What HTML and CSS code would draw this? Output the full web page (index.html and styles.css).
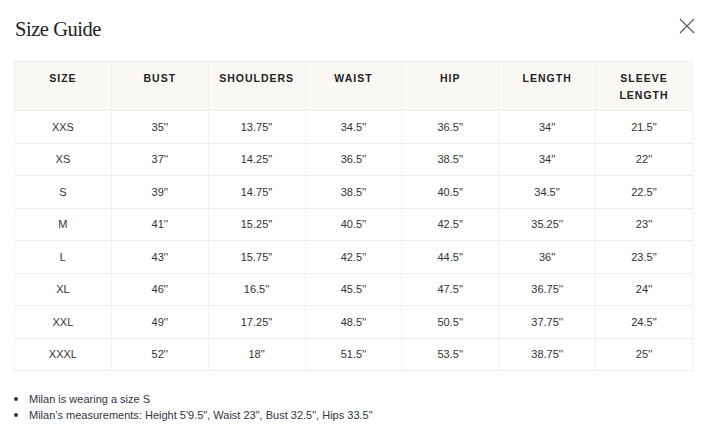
FILE: index.html
```html
<!DOCTYPE html>
<html>
<head>
<meta charset="utf-8">
<link rel="stylesheet" href="styles.css">
</head>
<body>
<div class="modal">
  <div class="head">
    <h1 class="title">Size Guide</h1>
    <button class="close" aria-label="Close">
      <svg width="16" height="16" viewBox="0 0 16 16"><path d="M1 1L15 15M15 1L1 15" stroke="#555" stroke-width="1.1" fill="none"/></svg>
    </button>
  </div>
  <table class="sizes">
    <thead>
      <tr><th>SIZE</th><th>BUST</th><th>SHOULDERS</th><th>WAIST</th><th>HIP</th><th>LENGTH</th><th>SLEEVE<br>LENGTH</th></tr>
    </thead>
    <tbody>
      <tr><td>XXS</td><td>35''</td><td>13.75''</td><td>34.5''</td><td>36.5''</td><td>34''</td><td>21.5''</td></tr>
      <tr><td>XS</td><td>37''</td><td>14.25''</td><td>36.5''</td><td>38.5''</td><td>34''</td><td>22''</td></tr>
      <tr><td>S</td><td>39''</td><td>14.75''</td><td>38.5''</td><td>40.5''</td><td>34.5''</td><td>22.5''</td></tr>
      <tr><td>M</td><td>41''</td><td>15.25''</td><td>40.5''</td><td>42.5''</td><td>35.25''</td><td>23''</td></tr>
      <tr><td>L</td><td>43''</td><td>15.75''</td><td>42.5''</td><td>44.5''</td><td>36''</td><td>23.5''</td></tr>
      <tr><td>XL</td><td>46''</td><td>16.5''</td><td>45.5''</td><td>47.5''</td><td>36.75''</td><td>24''</td></tr>
      <tr><td>XXL</td><td>49''</td><td>17.25''</td><td>48.5''</td><td>50.5''</td><td>37.75''</td><td>24.5''</td></tr>
      <tr><td>XXXL</td><td>52''</td><td>18''</td><td>51.5''</td><td>53.5''</td><td>38.75''</td><td>25''</td></tr>
    </tbody>
  </table>
  <ul class="notes">
    <li>Milan is wearing a size S</li>
    <li>Milan’s measurements: Height 5'9.5", Waist 23", Bust 32.5", Hips 33.5"</li>
  </ul>
</div>
</body>
</html>
```
FILE: styles.css
```css
* { box-sizing: border-box; }
html, body { margin: 0; padding: 0; background: #fff; }
body { font-family: "Liberation Sans", Arial, sans-serif; color: #333; }
.modal { padding: 14px 18px 0 14px; width: 711px; }
.head { display: flex; justify-content: space-between; align-items: flex-start; height: 47px; }
.title {
  margin: 0; padding-top: 5px; padding-left: 1px;
  font-family: "Liberation Serif", "Times New Roman", serif;
  font-weight: normal; font-size: 20.5px; letter-spacing: -0.45px; color: #222; line-height: 1;
}
.close { border: 0; background: none; padding: 0; margin-top: 4px; margin-right: -2px; width: 16px; height: 16px; cursor: pointer; }
.close svg { display: block; }
.sizes { width: 679px; border-collapse: collapse; table-layout: fixed; }
.sizes th, .sizes td { border: 1.5px solid #f3efe7; text-align: center; }
.sizes th {
  background: #faf8f4; font-size: 10.5px; font-weight: bold; letter-spacing: 1px; color: #222;
  vertical-align: top; padding: 8px 4px 6px; line-height: 17px; height: 49px;
}
.sizes td { font-size: 11px; height: 32.5px; padding: 0; color: #333; }
.notes { margin: 20px 0 0; padding-left: 15px; font-size: 11px; line-height: 16px; color: #2f3540; }
.notes li::marker { font-size: 13px; }
```
